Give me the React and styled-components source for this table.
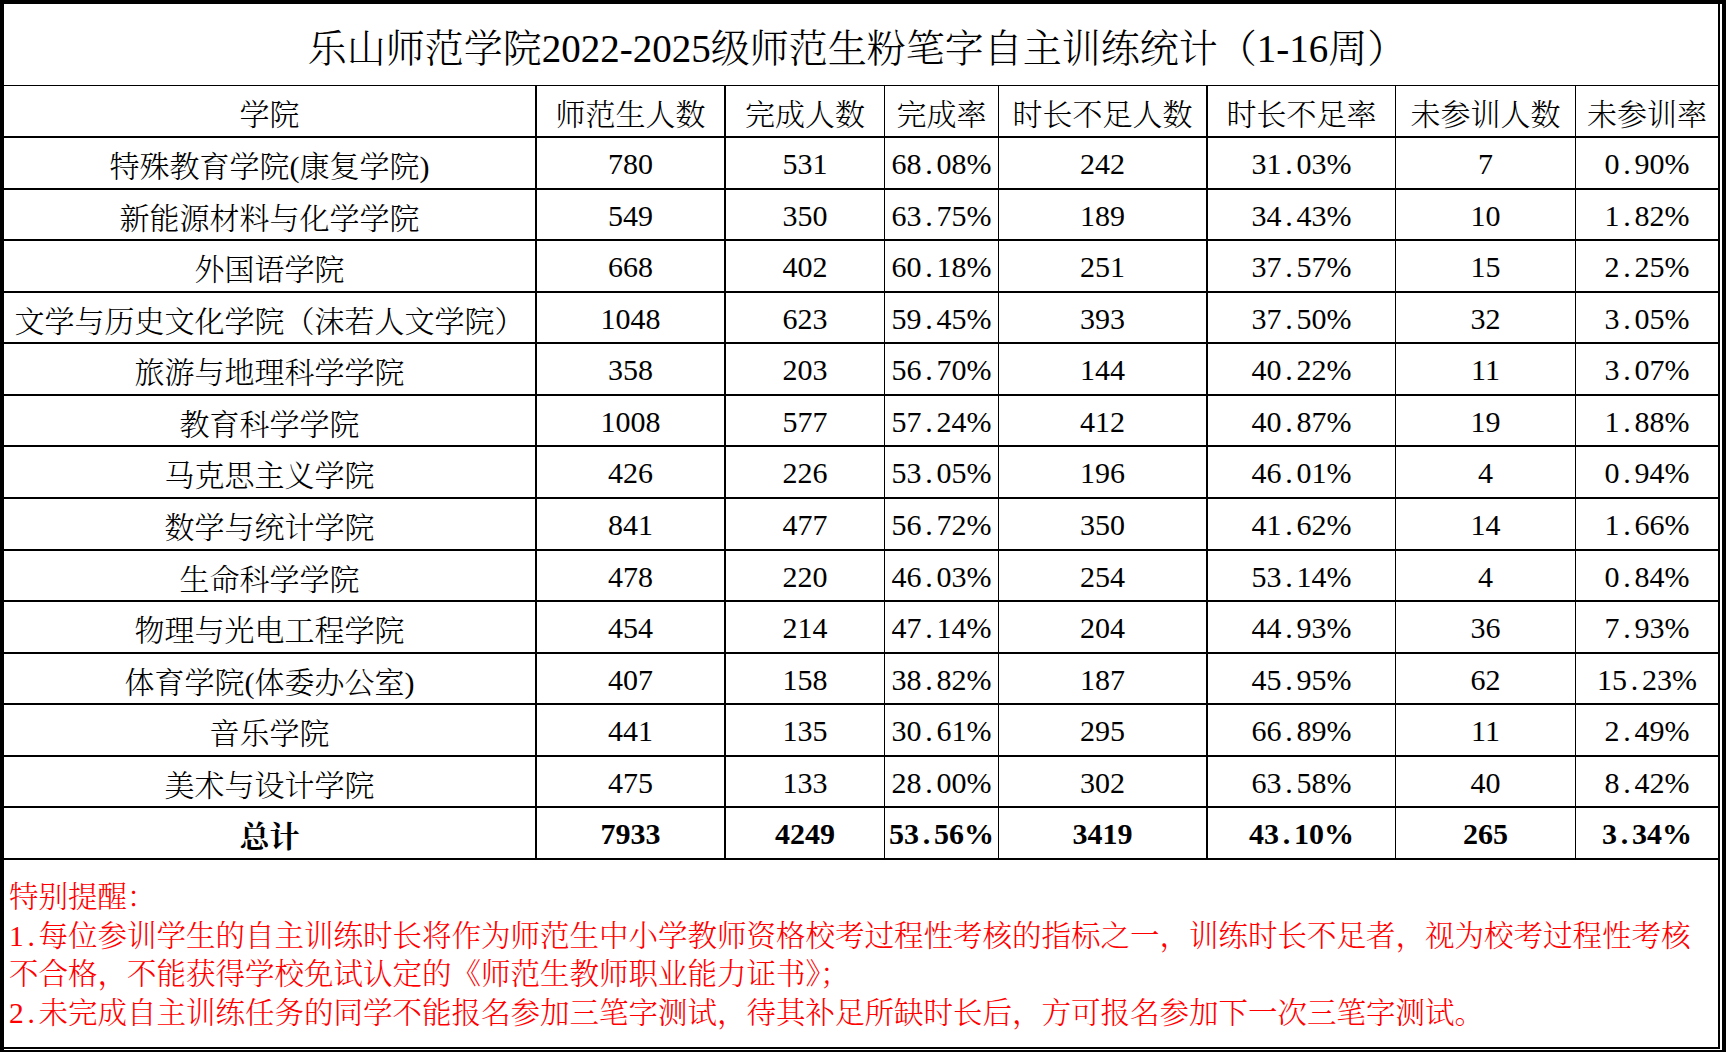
import React from "react";
import styled, { createGlobalStyle } from "styled-components";

const FONT =
  '"Liberation Serif", "Noto Serif CJK SC", "Noto Sans CJK SC", serif';

const GlobalStyle = createGlobalStyle`
  html, body {
    margin: 0;
    padding: 0;
    background: #fff;
  }
  body {
    font-family: ${FONT};
    color: #000;
  }
`;

// column widths, right border width of each column
const COLS = [533, 189, 159, 114, 209, 188, 180, 142];
const LINES = [2, 2, 1, 1, 2, 1, 1, 0];
const TEMPLATE = COLS.map((w) => `${w}px`).join(" ");

const Frame = styled.div`
  width: 1726px;
  height: 1052px;
  box-sizing: border-box;
  border: solid #000;
  border-width: 4px 4px 2px 4px;
  padding: 0 2px 1px 0;
  display: flex;
  flex-direction: column;
`;

const Sheet = styled.div`
  flex: 1;
  display: flex;
  flex-direction: column;
  border-right: 2px solid #000;
  border-bottom: 2px solid #000;
`;

const Title = styled.div`
  height: 82px;
  box-sizing: border-box;
  border-bottom: 1px solid #000;
  display: flex;
  align-items: center;
  justify-content: center;
  font-size: 39px;
  font-weight: 300;
  padding-right: 8px;
`;

const Row = styled.div`
  display: grid;
  grid-template-columns: ${TEMPLATE};
  box-sizing: border-box;
  height: ${(p) => p.$h}px;
  border-bottom: 2px solid #000;
  font-size: 30px;
  font-weight: ${(p) => (p.$bold ? 700 : 300)};
`;

const Cell = styled.div`
  box-sizing: border-box;
  border-right: ${(p) => p.$line}px solid #000;
  display: flex;
  align-items: center;
  justify-content: center;
  white-space: nowrap;
  padding-top: 2px;
`;

const Dot = styled.span`
  display: inline-block;
  width: 0.5em;
  text-align: center;
`;

const Notes = styled.div`
  flex: 1;
  padding: 18px 0 0 5px;
  color: #ff0000;
  font-size: 29.5px;
  font-weight: 300;
  line-height: 38.5px;
  white-space: nowrap;
`;

const rows = [
  ["特殊教育学院(康复学院)", "780", "531", "68.08%", "242", "31.03%", "7", "0.90%"],
  ["新能源材料与化学学院", "549", "350", "63.75%", "189", "34.43%", "10", "1.82%"],
  ["外国语学院", "668", "402", "60.18%", "251", "37.57%", "15", "2.25%"],
  ["文学与历史文化学院（沫若人文学院）", "1048", "623", "59.45%", "393", "37.50%", "32", "3.05%"],
  ["旅游与地理科学学院", "358", "203", "56.70%", "144", "40.22%", "11", "3.07%"],
  ["教育科学学院", "1008", "577", "57.24%", "412", "40.87%", "19", "1.88%"],
  ["马克思主义学院", "426", "226", "53.05%", "196", "46.01%", "4", "0.94%"],
  ["数学与统计学院", "841", "477", "56.72%", "350", "41.62%", "14", "1.66%"],
  ["生命科学学院", "478", "220", "46.03%", "254", "53.14%", "4", "0.84%"],
  ["物理与光电工程学院", "454", "214", "47.14%", "204", "44.93%", "36", "7.93%"],
  ["体育学院(体委办公室)", "407", "158", "38.82%", "187", "45.95%", "62", "15.23%"],
  ["音乐学院", "441", "135", "30.61%", "295", "66.89%", "11", "2.49%"],
  ["美术与设计学院", "475", "133", "28.00%", "302", "63.58%", "40", "8.42%"],
];

const total = ["总计", "7933", "4249", "53.56%", "3419", "43.10%", "265", "3.34%"];

const headers = [
  "学院",
  "师范生人数",
  "完成人数",
  "完成率",
  "时长不足人数",
  "时长不足率",
  "未参训人数",
  "未参训率",
];

// wide period like the sheet's half-width font
const Num = ({ text }) => {
  const parts = text.split(".");
  if (parts.length === 1) return text;
  return (
    <>
      {parts[0]}
      <Dot>.</Dot>
      {parts[1]}
    </>
  );
};

const DataRow = ({ cells, h, bold }) => (
  <Row $h={h} $bold={bold}>
    {cells.map((c, i) => (
      <Cell key={i} $line={LINES[i]}>
        {i === 0 ? c : <Num text={c} />}
      </Cell>
    ))}
  </Row>
);

export default function App() {
  // 14 body rows share 722px between y=138 and y=860
  const all = [...rows, total];
  const heights = all.map(
    (_, i) => Math.round(51.57 * (i + 1)) - Math.round(51.57 * i)
  );

  return (
    <>
      <GlobalStyle />
      <Frame>
        <Sheet>
          <Title>乐山师范学院2022-2025级师范生粉笔字自主训练统计（1-16周）</Title>
          <Row $h={52}>
            {headers.map((t, i) => (
              <Cell key={t} $line={LINES[i]}>
                {t}
              </Cell>
            ))}
          </Row>
          {all.map((r, i) => (
            <DataRow key={r[0]} cells={r} h={heights[i]} bold={i === all.length - 1} />
          ))}
          <Notes>
            特别提醒：
            <br />
            1<Dot>.</Dot>每位参训学生的自主训练时长将作为师范生中小学教师资格校考过程性考核的指标之一，训练时长不足者，视为校考过程性考核
            <br />
            不合格，不能获得学校免试认定的《师范生教师职业能力证书》；
            <br />
            2<Dot>.</Dot>未完成自主训练任务的同学不能报名参加三笔字测试，待其补足所缺时长后，方可报名参加下一次三笔字测试。
          </Notes>
        </Sheet>
      </Frame>
    </>
  );
}
